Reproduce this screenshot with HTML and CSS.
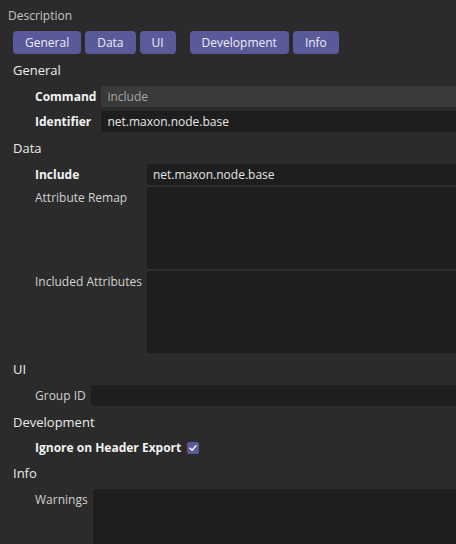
FILE: index.html
```html
<!DOCTYPE html>
<html lang="en">
<head>
<meta charset="utf-8">
<title>Description</title>
<link rel="stylesheet" href="styles.css">
</head>
<body>
<div class="page">
  <div class="title">Description</div>
  <div class="tabs">
    <span class="tab">General</span>
    <span class="tab">Data</span>
    <span class="tab tab-ui">UI</span>
    <span class="tab">Development</span>
    <span class="tab">Info</span>
  </div>

  <div class="section-title">General</div>
  <div class="grid">
    <div class="label bold">Command</div>
    <div class="field disabled">include</div>
    <div class="label bold">Identifier</div>
    <div class="field">net.maxon.node.base</div>
  </div>

  <div class="section-title">Data</div>
  <div class="grid grid-tight">
    <div class="label bold">Include</div>
    <div class="field">net.maxon.node.base</div>
    <div class="label">Attribute Remap</div>
    <div class="field tall"></div>
    <div class="label">Included Attributes</div>
    <div class="field tall"></div>
  </div>

  <div class="section-title">UI</div>
  <div class="grid">
    <div class="label">Group ID</div>
    <div class="field"></div>
  </div>

  <div class="section-title">Development</div>
  <div class="check-row">
    <span class="label bold">Ignore on Header Export</span>
    <span class="checkbox">
      <svg viewBox="0 0 12 12" width="12" height="12"><path d="M3 6.2 L5.1 8.2 L9 3.8" fill="none" stroke="#ffffff" stroke-width="1.4" stroke-linecap="round" stroke-linejoin="round"/></svg>
    </span>
  </div>

  <div class="section-title">Info</div>
  <div class="grid">
    <div class="label">Warnings</div>
    <div class="field warn"></div>
  </div>
</div>
</body>
</html>
```

FILE: styles.css
```css
html, body {
  margin: 0;
  padding: 0;
  background: #2b2b2b;
  overflow: hidden;
}

body {
  font-family: "Open Sans", "Noto Sans", sans-serif;
  font-size: 12px;
  color: #d4d4d4;
}

.page {
  padding: 6px 0 0 8px;
}

.title {
  line-height: 20px;
  color: #c6c6c6;
}

.tabs {
  display: flex;
  gap: 4px;
  margin: 5px 0 0 5px;
}

.tab {
  height: 23px;
  line-height: 23px;
  padding: 0 12px;
  background: #5a5a9b;
  border-radius: 4px;
  color: #ececf6;
}

.tab-ui {
  margin-right: 10px;
}

.section-title {
  padding: 6px 0 6px 5px;
  line-height: 20px;
  font-size: 13px;
  color: #ececec;
}

.grid {
  display: grid;
  grid-template-columns: max-content 1fr;
  column-gap: 5px;
  row-gap: 4px;
  padding-left: 27px;
}

.grid-tight {
  row-gap: 2px;
}

.label {
  line-height: 21px;
  color: #d2d2d2;
}

.label.bold {
  font-weight: 700;
  color: #f2f2f2;
}

.field {
  height: 21px;
  line-height: 21px;
  padding-left: 6px;
  background: #1e1e1e;
  border-radius: 3px 0 0 3px;
  color: #e6e6e6;
}

.field.disabled {
  background: #3a3a3a;
  color: #a6a6a6;
}

.field.tall {
  height: 82px;
}

.field.warn {
  height: 56px;
}

.check-row {
  display: flex;
  align-items: center;
  gap: 6px;
  padding-left: 27px;
  height: 19px;
}

.checkbox {
  width: 12px;
  height: 12px;
  border-radius: 2px;
  background: #5a5a9b;
  display: flex;
}
```
